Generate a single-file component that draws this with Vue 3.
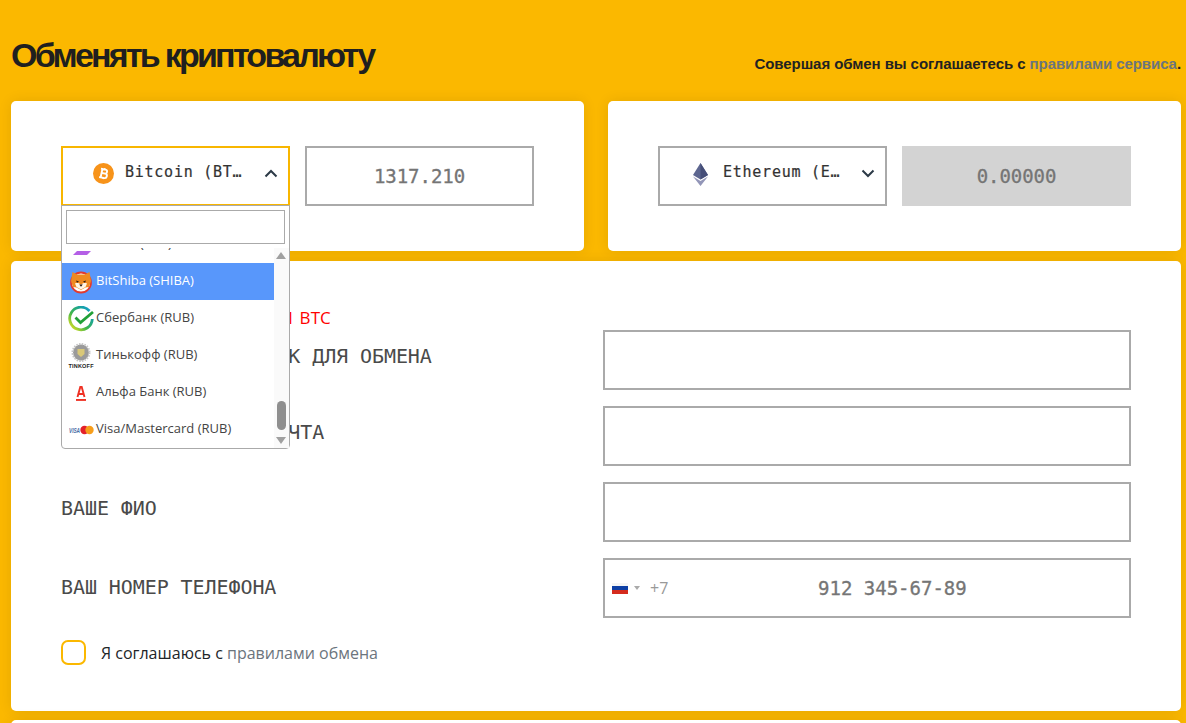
<script setup>
const rows = [
  { label: 'НОМЕР КАРТЫ ИЛИ БАНК ДЛЯ ОБМЕНА' },
  { label: 'ВАША ЭЛЕКТРОННАЯ ПОЧТА' },
  { label: 'ВАШЕ ФИО' },
]
</script>

<template>
  <div class="page">
    <header class="head">
      <h1>Обменять криптовалюту</h1>
      <p>Совершая обмен вы соглашаетесь с <a>правилами сервиса</a>.</p>
    </header>

    <section class="pair">
      <div class="card exch">
        <div class="select-wrap">
          <div class="select open">
            <svg class="coin" viewBox="0 0 21 21" width="21" height="21">
              <circle cx="10.500" cy="10.500" r="10.500" fill="#f7931a" />
              <path d="M8.500 6v9M10.900 5v1.200M10.900 14.800V16M7 6.200h4.800c2.400 0 2.400 4.100 0 4.100H8.500M8.500 10.300h3.800c2.700 0 2.700 4.500 0 4.500H7" fill="none" stroke="#fff" stroke-width="1.900" transform="rotate(12 10.500 10.500)" />
            </svg>
            <span class="sel-text">Bitcoin (BT…</span>
            <svg class="chev" viewBox="0 0 14 9" width="14" height="9"><path d="M1.500 7.500 7 2l5.500 5.500" fill="none" stroke="#2c3a47" stroke-width="2" /></svg>
          </div>
          <div class="dropdown">
            <input class="search" />
            <div class="list">
              <div class="opt cut">
                <svg class="ico" viewBox="0 0 26 26" width="26" height="26"><path d="M9 19h14l-4 4H5z" fill="#b45fe6" /></svg>
                <span>Solana (SOL)</span>
              </div>
              <div class="opt active">
                <svg class="ico" viewBox="0 0 26 26" width="26" height="26">
                  <circle cx="13" cy="13.500" r="10" fill="#fff" stroke="#e23a2e" stroke-width="1.800" />
                  <path d="M4.500 3 9 5.500h8L21.500 3l1.500 9-2 6-3.500.5L13 21l-4.500-2.500L5 18l-2-6z" fill="#ee8a21" />
                  <path d="M7 14.500c2-1 4.500-.5 6 1.500 1.500-2 4-2.500 6-1.500L17.500 18 13 20.500 8.500 18z" fill="#fff6e6" />
                  <path d="M8 11.500l3 1-2 1.200zM18 11.500l-3 1 2 1.200z" fill="#2b1a14" />
                  <path d="M11.200 15.500h3.600L13 17.800z" fill="#2a1712" />
                </svg>
                <span>BitShiba (SHIBA)</span>
              </div>
              <div class="opt">
                <svg class="ico" viewBox="0 0 26 26" width="26" height="26">
                  <defs>
                    <linearGradient id="sb" x1="0" y1="1" x2="1" y2="0"><stop offset="0" stop-color="#f5e61e" /><stop offset=".4" stop-color="#3fb54a" /><stop offset=".75" stop-color="#17a2a0" /><stop offset="1" stop-color="#1a9fe0" /></linearGradient>
                  </defs>
                  <path d="M21.500 5A11.300 11.300 0 1 0 24.300 13" fill="none" stroke="url(#sb)" stroke-width="2.800" />
                  <path d="M7.500 11.500l5 5L25 6" fill="none" stroke="#21a038" stroke-width="2.800" />
                </svg>
                <span>Сбербанк (RUB)</span>
              </div>
              <div class="opt">
                <svg class="ico" viewBox="0 0 26 26" width="26" height="26">
                  <circle cx="13" cy="9.500" r="8" fill="#9a9a9a" />
                  <circle cx="13" cy="9.500" r="8.500" fill="none" stroke="#c4c4c4" stroke-width="2" stroke-dasharray="1.500 1.200" />
                  <path d="M9.500 6h7v5l-3.500 3-3.500-3z" fill="#d9c877" />
                  <text x="0.500" y="25" class="tink" textLength="25" lengthAdjust="spacing">TINKOFF</text>
                </svg>
                <span>Тинькофф (RUB)</span>
              </div>
              <div class="opt">
                <svg class="ico" viewBox="0 0 26 26" width="26" height="26">
                  <path d="M9.500 17 12.300 7h1.400l2.800 10M10.500 14h5" fill="none" stroke="#ef3124" stroke-width="1.900" />
                  <rect x="8" y="19" width="10" height="1.900" fill="#ef3124" />
                </svg>
                <span>Альфа Банк (RUB)</span>
              </div>
              <div class="opt">
                <svg class="ico" viewBox="0 0 26 26" width="26" height="26">
                  <text x="1" y="15.500" class="visa" textLength="11" lengthAdjust="spacingAndGlyphs">VISA</text>
                  <circle cx="16.500" cy="13" r="4.200" fill="#e3202a" />
                  <circle cx="21.500" cy="13" r="4.200" fill="#f79e1b" />
                </svg>
                <span>Visa/Mastercard (RUB)</span>
              </div>
              <div class="scroll">
                <i class="up"></i>
                <b class="thumb"></b>
                <i class="down"></i>
              </div>
            </div>
          </div>
        </div>
        <input class="box amount" value="1317.210" />
      </div>

      <div class="card exch">
        <div class="select">
          <svg class="coin eth" viewBox="0 0 15 23" width="15" height="23">
            <path d="M7.500 0 0 12l7.500 4.500L15 12z" fill="#5d6690" />
            <path d="M7.500 0v16.500L15 12z" fill="#454e78" />
            <path d="M0 13.500 7.500 23 15 13.500l-7.500 4.500z" fill="#9396b8" />
          </svg>
          <span class="sel-text">Ethereum (E…</span>
          <svg class="chev" viewBox="0 0 14 9" width="14" height="9"><path d="M1.500 1.500 7 7l5.500-5.500" fill="none" stroke="#2c3a47" stroke-width="2" /></svg>
        </div>
        <input class="box amount off" value="0.00000" readonly />
      </div>
    </section>

    <section class="card form">
      <p class="err">Минимальная сумма 0.0001 BTC</p>
      <div v-for="r in rows" :key="r.label" class="row">
        <label>{{ r.label }}</label>
        <input class="box" />
      </div>
      <div class="row">
        <label class="tel">ВАШ НОМЕР ТЕЛЕФОНА</label>
        <div class="box phone">
          <span class="flag"><i></i><i></i><i></i></span>
          <span class="caret"></span>
          <span class="code">+7</span>
          <span class="num">912 345-67-89</span>
        </div>
      </div>
      <div class="agree">
        <span class="check"></span>
        <span>Я соглашаюсь с <a>правилами обмена</a></span>
      </div>
    </section>
    <section class="card next"></section>
  </div>
</template>

<style>
html, body { margin: 0; background: #fbb800; overflow: hidden; }
</style>

<style scoped>
.page {
  height: 723px;
  box-sizing: border-box;
  overflow: hidden;
  padding: 0 5px 0 11px;
  background: #fbb800;
  font-family: "Open Sans", sans-serif;
  color: #212529;
}
.head {
  height: 101px;
  display: flex;
  justify-content: space-between;
  align-items: flex-start;
}
h1 {
  margin: 35px 0 0;
  font: 700 34px/40px "Liberation Sans", sans-serif;
  letter-spacing: -2.75px;
  color: #1f1f1f;
}
.head p {
  margin: 54px 0 0;
  font: 700 15px/20px "Liberation Sans", sans-serif;
  letter-spacing: -.07px;
  color: #222;
}
.head a { color: #6c757d; }
.card {
  background: #fff;
  border-radius: 5px;
  box-shadow: 0 0 14px rgba(0, 0, 0, .09);
}
.pair { display: flex; gap: 24px; }
.exch {
  flex: 1;
  height: 150px;
  box-sizing: border-box;
  padding: 45px 50px;
  display: flex;
  gap: 15px;
}
.select-wrap { position: relative; width: 229px; height: 60px; }
.select {
  width: 229px;
  height: 60px;
  box-sizing: border-box;
  border: 2px solid #aaa;
  display: flex;
  align-items: center;
  padding: 0 10px 8px 30px;
  background: #fff;
  font: 500 15px/20px "DejaVu Sans Mono", monospace;
  color: #333;
}
.select.open { border-color: #f8b600; }
.coin { flex: none; width: 21px; margin: 2px 11px 0 0; }
.coin.eth { width: 15px; margin: 4px 15px 0 3px; }
.sel-text {
  flex: 1;
  white-space: nowrap;
  letter-spacing: .75px;
  -webkit-text-stroke: .2px #333;
}
.chev { flex: none; margin-bottom: -3px; }
.box {
  display: block;
  width: 229px;
  height: 60px;
  box-sizing: border-box;
  border: 2px solid #aaa;
  background: #fff;
  outline: none;
}
.amount {
  text-align: center;
  font: 500 19px "DejaVu Sans Mono", monospace;
  color: #757575;
  letter-spacing: -.05px;
  -webkit-text-stroke: .3px #757575;
}
.amount.off { background: #d3d3d3; border: 0; }
.dropdown {
  position: absolute;
  z-index: 5;
  left: 0;
  top: 59px;
  width: 229px;
  height: 244px;
  box-sizing: border-box;
  background: #fff;
  border: 1px solid #aaa;
  border-radius: 0 0 4px 4px;
}
.search {
  display: block;
  box-sizing: border-box;
  width: 219px;
  height: 34px;
  margin: 4px 4px 0;
  border: 1px solid #aaa;
  outline: none;
}
.list {
  position: relative;
  height: 200px;
  margin-top: 4px;
  overflow: hidden;
}
.opt {
  display: flex;
  align-items: center;
  width: 212px;
  height: 37px;
  padding-left: 6px;
  box-sizing: border-box;
  font-size: 13px;
  color: #444;
  white-space: nowrap;
}
.opt span { margin-top: -4px; }
.opt.cut { margin-top: -22px; }
.opt.active { background: #5897fb; color: #fff; }
.ico { flex: none; width: 26px; margin-right: 2px; }
.tink { font: 700 5.500px "Liberation Sans", sans-serif; fill: #222; }
.visa { font: italic 700 6.500px "Liberation Sans", sans-serif; fill: #4a6aa5; }
.scroll {
  position: absolute;
  right: 0;
  top: 0;
  bottom: 0;
  width: 15px;
  background: #fafafa;
}
.up, .down {
  position: absolute;
  left: 2px;
  border-left: 5px solid transparent;
  border-right: 5px solid transparent;
}
.up { top: 4px; border-bottom: 7px solid #a0a0a0; }
.down { bottom: 4px; border-top: 7px solid #a0a0a0; }
.thumb {
  position: absolute;
  left: 3px;
  top: 153px;
  width: 9px;
  height: 29px;
  border-radius: 5px;
  background: #8f8f8f;
}
.form {
  margin-top: 10px;
  height: 450px;
  box-sizing: border-box;
  padding: 46px 50px 0;
}
.err {
  margin: 0 0 1px;
  height: 22px;
  font-size: 17px;
  line-height: 22px;
  letter-spacing: .09px;
  color: #f00;
}
.row {
  display: flex;
  justify-content: space-between;
  align-items: center;
  margin-bottom: 16px;
}
.row label {
  font: 400 20px "DejaVu Sans Mono", monospace;
  color: #4a4a4a;
  white-space: nowrap;
  margin-top: -9px;
  letter-spacing: -.08px;
}
.row label.tel { margin-top: -2px; }
.row .box { width: 528px; }
.phone {
  position: relative;
  display: flex;
  align-items: center;
  padding-left: 7px;
}
.flag {
  width: 16px;
  height: 11px;
  display: flex;
  flex-direction: column;
}
.flag i { flex: 1; }
.flag i:nth-child(1) { background: #f5f5f5; }
.flag i:nth-child(2) { background: #0d3fa5; }
.flag i:nth-child(3) { background: #d52b1e; }
.caret {
  margin-left: 6px;
  border-left: 3px solid transparent;
  border-right: 3px solid transparent;
  border-top: 4px solid #aaa;
}
.code { margin-left: 10px; font-size: 16px; color: #999; }
.num {
  position: absolute;
  left: 213px;
  font: 500 19px "DejaVu Sans Mono", monospace;
  color: #757575;
  -webkit-text-stroke: .3px #757575;
}
.agree {
  display: flex;
  align-items: center;
  gap: 15px;
  margin-top: 22px;
  font-size: 16px;
}
.agree a { color: #6c757d; }
.check {
  width: 25px;
  height: 25px;
  box-sizing: border-box;
  border: 2px solid #fbb800;
  border-radius: 7px;
}
.next { margin-top: 9px; height: 60px; }
</style>
